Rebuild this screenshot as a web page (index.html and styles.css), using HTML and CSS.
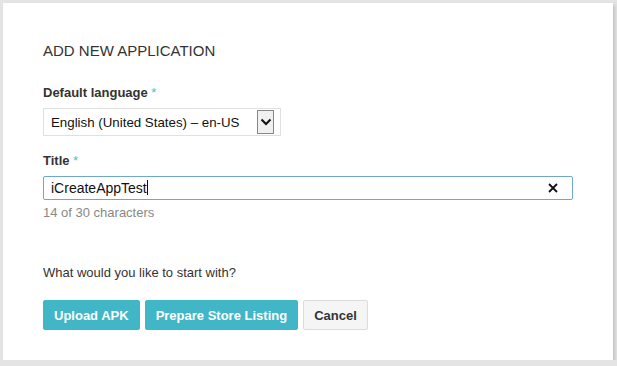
FILE: index.html
```html
<!DOCTYPE html>
<html lang="en">
  <head>
    <meta charset="UTF-8" />
    <title>Add New Application</title>
    <link rel="stylesheet" href="styles.css">
  </head>
  <body>
    <div class="dialog">
      <h2 class="dialog-title">ADD NEW APPLICATION</h2>

      <div class="form-group">
        <label class="field-label">Default language <span class="req">*</span></label>
        <div class="select">
          <span class="select-value">English (United States) – en-US</span>
          <span class="select-arrow">
            <svg width="12" height="8" viewBox="0 0 12 8"><path d="M1.5 1.5 L6 6 L10.5 1.5" fill="none" stroke="#111" stroke-width="2"/></svg>
          </span>
        </div>
      </div>

      <div class="form-group">
        <label class="field-label">Title <span class="req">*</span></label>
        <div class="text-input">
          <span class="input-value">iCreateAppTest<span class="caret"></span></span>
          <svg class="clear" width="10" height="10" viewBox="0 0 10 10"><path d="M1 1 L9 9 M9 1 L1 9" stroke="#111" stroke-width="1.8"/></svg>
        </div>
        <div class="hint">14 of 30 characters</div>
      </div>

      <p class="question">What would you like to start with?</p>

      <div class="actions">
        <button class="btn btn-primary">Upload APK</button>
        <button class="btn btn-primary">Prepare Store Listing</button>
        <button class="btn btn-default">Cancel</button>
      </div>
    </div>
  </body>
</html>
```

FILE: styles.css
```css
body {
  margin: 0;
  background: #e4e4e4;
  font-family: "Liberation Sans", Arial, sans-serif;
  color: #333;
}
.dialog {
  margin: 3px 0 0 3px;
  width: 610px;
  height: 357px;
  box-sizing: border-box;
  padding: 38px 40px 0 40px;
  background: #fff;
  box-shadow: 2px 2px 3px rgba(0, 0, 0, 0.15);
}
.dialog-title {
  margin: 0 0 24px 0;
  font-size: 15px;
  font-weight: normal;
  color: #333;
  line-height: 20px;
}
.form-group {
  margin-bottom: 17px;
}
.field-label {
  display: block;
  font-size: 13px;
  font-weight: bold;
  line-height: 16px;
  margin-bottom: 7px;
}
.req {
  color: #4cc0c4;
  font-weight: normal;
}
.select {
  width: 238px;
  height: 28px;
  box-sizing: border-box;
  border: 1px solid #e0e0e0;
  display: flex;
  align-items: center;
  justify-content: space-between;
  padding: 0 6px 0 7px;
  font-size: 13.3px;
  color: #111;
}
.select-arrow {
  width: 15px;
  height: 22px;
  border: 1px solid #888;
  background: #f0f0f0;
  display: flex;
  align-items: center;
  justify-content: center;
}
.text-input {
  width: 530px;
  height: 24px;
  box-sizing: border-box;
  border: 1px solid #6fa8c8;
  border-radius: 2px;
  display: flex;
  align-items: center;
  justify-content: space-between;
  padding: 0 14px 0 7px;
  font-size: 14px;
  color: #111;
}
.caret {
  display: inline-block;
  width: 1px;
  height: 15px;
  background: #111;
  vertical-align: -2px;
}
.hint {
  margin-top: 5px;
  font-size: 13px;
  color: #888;
}
.question {
  margin: 45px 0 20px 0;
  font-size: 13px;
  color: #333;
}
.actions {
  display: flex;
  gap: 5px;
}
.btn {
  height: 30px;
  padding: 0 10px;
  border-radius: 2px;
  font-family: "Liberation Sans", Arial, sans-serif;
  font-size: 13px;
  font-weight: bold;
  cursor: pointer;
}
.btn-primary {
  background: #41b6c7;
  color: #fff;
  border: 1px solid #41b6c7;
}
.btn-default {
  background: #f5f5f5;
  color: #333;
  border: 1px solid #dcdcdc;
}
```
